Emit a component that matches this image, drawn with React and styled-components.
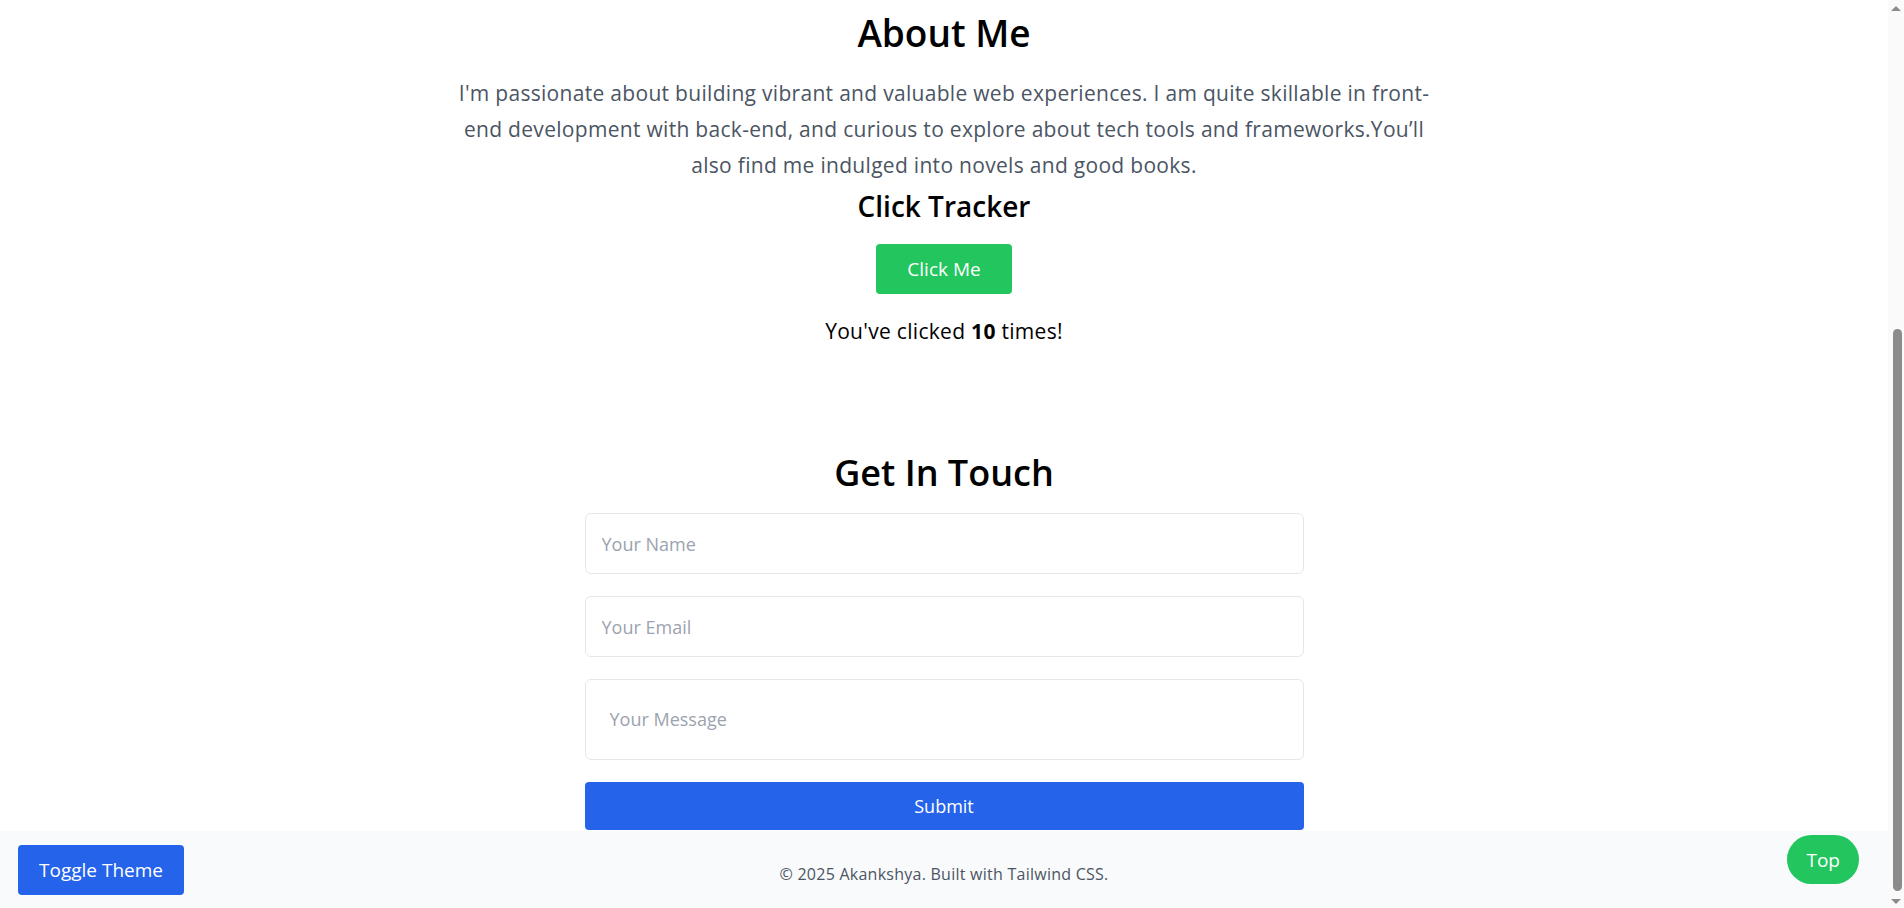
import React, { useState } from 'react';
import styled, { createGlobalStyle } from 'styled-components';

const GlobalStyle = createGlobalStyle`
  body {
    margin: 0;
    font-family: "Open Sans", "Liberation Sans", sans-serif;
    background-color: #fff;
    color: #000;
  }

  * {
    box-sizing: border-box;
  }
`;

const Page = styled.div`
  display: flex;
  flex-direction: column;
  min-height: 100vh;
  margin-right: 16px;
`;

const AboutSection = styled.section`
  display: flex;
  flex-direction: column;
  align-items: center;
  text-align: center;
  padding-top: 13px;
`;

const SectionTitle = styled.h2`
  font-size: ${({ $size }) => $size || 37}px;
  line-height: 40px;
  font-weight: 600;
  margin: 0 0 ${({ $gap }) => $gap || 22}px;
`;

const Lead = styled.p`
  width: 982px;
  margin: 0;
  font-size: 21px;
  line-height: 36px;
  letter-spacing: 0.3px;
  color: #4b5563;
`;

const SubTitle = styled.h3`
  font-size: 28px;
  line-height: 32px;
  font-weight: 600;
  margin: 7px 0 22px;
`;

const ActionButton = styled.button`
  height: 50px;
  padding: 0 31px;
  border: none;
  border-radius: 4px;
  background-color: #22c55e;
  color: #fff;
  font-family: inherit;
  font-size: 19px;
  cursor: pointer;

  &:hover {
    background-color: #16a34a;
  }
`;

const Counter = styled.p`
  margin: 23px 0 0;
  font-size: 21px;
  line-height: 28px;
  letter-spacing: 0.3px;

  strong {
    font-weight: 700;
  }
`;

const ContactSection = styled.section`
  display: flex;
  flex-direction: column;
  align-items: center;
  padding-top: 108px;
`;

const Form = styled.form`
  display: flex;
  flex-direction: column;
  gap: 22px;
  width: 719px;
`;

const Field = styled.input`
  height: 61px;
  padding: 0 16px;
  border: 1px solid #e5e7eb;
  border-radius: 6px;
  font-family: inherit;
  font-size: 18px;
  color: #111827;
  outline: none;

  &::placeholder {
    color: #9ca3af;
  }
`;

const MessageField = styled.textarea`
  height: 81px;
  padding: 24px;
  border: 1px solid #e5e7eb;
  border-radius: 6px;
  font-family: inherit;
  font-size: 18px;
  line-height: 30px;
  color: #111827;
  resize: none;
  outline: none;
  overflow: hidden;

  &::placeholder {
    color: #9ca3af;
  }
`;

const SubmitButton = styled.button`
  height: 48px;
  border: none;
  border-radius: 4px;
  background-color: #2563eb;
  color: #fff;
  font-family: inherit;
  font-size: 18px;
  cursor: pointer;
`;

const Footer = styled.footer`
  margin-top: 1px;
  height: 78px;
  padding-top: 31px;
  background-color: #f9fafb;
  text-align: center;
  font-size: 16px;
  line-height: 24px;
  letter-spacing: 0.25px;
  color: #4b5563;
`;

const FloatingButton = styled.button`
  position: fixed;
  bottom: ${({ $bottom }) => $bottom}px;
  ${({ $side }) => ($side === 'left' ? 'left: 18px;' : 'right: 45px;')}
  height: ${({ $round }) => ($round ? 49 : 50)}px;
  padding: 0 ${({ $round }) => ($round ? 19 : 21)}px;
  border: none;
  border-radius: ${({ $round }) => ($round ? '999px' : '4px')};
  background-color: ${({ $color }) => $color};
  color: #fff;
  font-family: inherit;
  font-size: 19px;
  cursor: pointer;
`;

// the page is scrolled to its bottom in the reference, the rail mirrors the browser's bar
const ScrollRail = styled.aside`
  position: fixed;
  top: 0;
  right: 0;
  bottom: 0;
  width: 16px;
  display: flex;
  flex-direction: column;
  align-items: center;
  padding: 6px 0 4px;
  background-color: #fafafa;
`;

const RailArrow = styled.span`
  width: 0;
  height: 0;
  border-left: 5px solid transparent;
  border-right: 5px solid transparent;
  ${({ $down }) =>
    $down ? 'border-top: 5px solid #8b8b8b;' : 'border-bottom: 5px solid #8b8b8b;'}
`;

const RailThumb = styled.span`
  width: 9px;
  height: 562px;
  margin: auto 0 8px 3px;
  border-radius: 5px;
  background-color: #8b8b8b;
`;

const App = () => {
  const [clicks, setClicks] = useState(10);

  return (
    <Page>
      <GlobalStyle />
      <AboutSection>
        <SectionTitle>About Me</SectionTitle>
        <Lead>
          I'm passionate about building vibrant and valuable web experiences. I am quite skillable in front-end
          development with back-end, and curious to explore about tech tools and frameworks.You’ll also find me
          indulged into novels and good books.
        </Lead>
        <SubTitle>Click Tracker</SubTitle>
        <ActionButton onClick={() => setClicks(clicks + 1)}>Click Me</ActionButton>
        <Counter>
          You've clicked <strong>{clicks}</strong> times!
        </Counter>
      </AboutSection>

      <ContactSection>
        <SectionTitle $size={36} $gap={20}>Get In Touch</SectionTitle>
        <Form onSubmit={(e) => e.preventDefault()}>
          <Field type="text" placeholder="Your Name" />
          <Field type="email" placeholder="Your Email" />
          <MessageField rows={1} placeholder="Your Message" />
          <SubmitButton type="submit">Submit</SubmitButton>
        </Form>
      </ContactSection>

      <Footer>© 2025 Akankshya. Built with Tailwind CSS.</Footer>

      <FloatingButton $side="left" $bottom={13} $color="#2563eb">
        Toggle Theme
      </FloatingButton>
      <FloatingButton
        $side="right"
        $bottom={24}
        $round
        $color="#22c55e"
        onClick={() => window.scrollTo({ top: 0, behavior: 'smooth' })}
      >
        Top
      </FloatingButton>

      <ScrollRail>
        <RailArrow />
        <RailThumb />
        <RailArrow $down />
      </ScrollRail>
    </Page>
  );
};

export default App;
